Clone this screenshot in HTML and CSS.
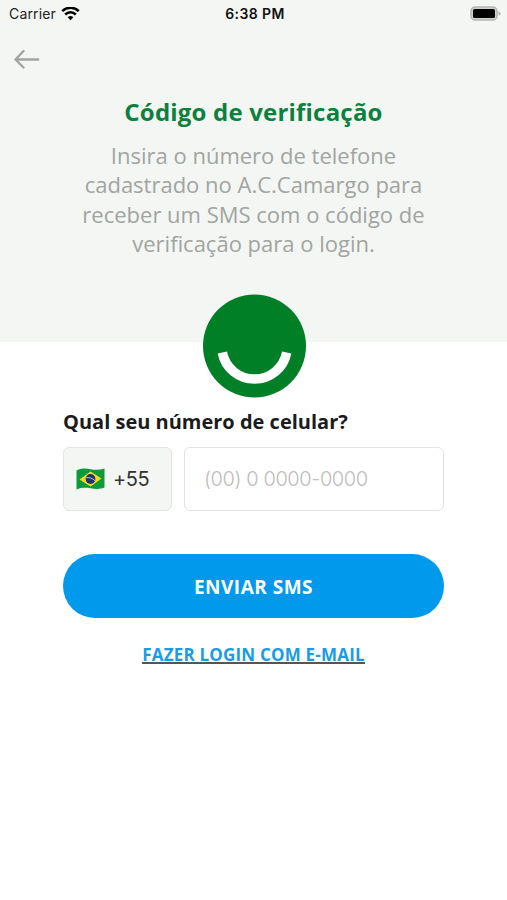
FILE: index.html
```html
<!DOCTYPE html>
<html lang="pt-BR">
<head>
    <meta charset="UTF-8">
    <meta name="viewport" content="width=device-width, initial-scale=1">
    <title>Código de verificação</title>
    <link rel="stylesheet" href="styles.css">
</head>

<body>

<header class="top">
    <div class="status">
        <div class="carrier">
            <span>Carrier</span>
            <svg width="19" height="14" viewBox="0 0 19 14" fill="none" stroke="#000" stroke-width="2.6">
                <path d="M1.2 4.2a11.8 11.8 0 0 1 16.6 0"/>
                <path d="M4.2 7.5a7.5 7.5 0 0 1 10.6 0"/>
                <path d="M9.5 13.2l-2.8-2.900a4 4 0 0 1 5.600 0z" fill="#000" stroke="none"/>
            </svg>
        </div>
        <div class="time">6:38 PM</div>
        <svg class="battery" width="32" height="16" viewBox="0 0 32 16">
            <rect x="1" y="1" width="26" height="13" rx="4" fill="#d0d2d0" stroke="#b4b6b4" stroke-width="1.5"/>
            <rect x="3" y="3" width="22" height="9" rx="1.5" fill="#000"/>
            <path d="M28.5 5l2.5 2.5-2.5 2.5z" fill="#adafad"/>
        </svg>
    </div>

    <a class="back" href="#" aria-label="Voltar">
        <svg width="26" height="20" viewBox="0 0 26 20" fill="none" stroke="#a2a4a2" stroke-width="2.4" stroke-linecap="round" stroke-linejoin="round">
            <path d="M9.500 2L1.500 10.500l8 8M1.500 10.500h22.700"/>
        </svg>
    </a>

    <h1>Código de verificação</h1>
    <p>Insira o número de telefone<br>cadastrado no A.C.Camargo para<br>receber um SMS com o código de<br>verificação para o login.</p>
</header>

<main>
    <svg class="logo" width="104" height="104" viewBox="0 0 104 104">
        <circle cx="52.5" cy="52" r="51.5" fill="#007f27"/>
        <path d="M20.3 58.500a32.800 32.800 0 0 0 64.400 0" fill="none" stroke="#fff" stroke-width="9.500"/>
    </svg>

    <form>
        <label for="phone">Qual seu número de celular?</label>
        <div class="fields">
            <div class="country">
                <svg width="29" height="22" viewBox="0 0 29 22">
                    <path d="M.5 2.500C5 .2 9.500.3 14.500 1.200S24 2 28.500.5V19.500C24 21.500 19 21 14.500 20.300S5 19.500.5 21.500z" fill="#0a9b3b"/>
                    <path d="M3.500 11.500L14.500 3.500l11 7-11 8z" fill="#fbd91a"/>
                    <circle cx="14.500" cy="11" r="4.900" fill="#1b3474"/>
                    <path d="M10 9.700c3.500-.5 6.500.5 9 3" fill="none" stroke="#c7d3df" stroke-width=".9"/>
                </svg>
                <span>+55</span>
            </div>
            <input id="phone" type="tel" placeholder="(00) 0 0000-0000">
        </div>
        <button type="button">ENVIAR SMS</button>
    </form>

    <a class="email" href="#">FAZER LOGIN COM E-MAIL</a>
</main>

</body>
</html>
```
FILE: styles.css
```css
* { box-sizing: border-box; }

body { margin: 0; background: #fff; font-family: 'Open Sans', sans-serif; }
svg  { display: block; }

.top { height: 342px; background: #f4f6f4; text-align: center; }

.status   { display: grid; grid-template-columns: 1fr auto 1fr; align-items: center; height: 27px; padding: 0 5px 0 9px; font-family: Inter, sans-serif; font-size: 14px; color: #222; }
.carrier  { display: flex; align-items: center; gap: 5px; letter-spacing: .15px; }
.time     { margin-right: 1px; font-weight: 600; letter-spacing: .4px; color: #111; }
.battery  { justify-self: end; }

.back { display: block; width: 26px; margin: 22px 0 0 14px; }

.top h1 { margin: 26px 0 0; font-size: 24px; line-height: 34px; font-weight: 700; letter-spacing: .2px; color: #0b813d; }
.top p  { margin: 12px 0 0; font-size: 22px; line-height: 29.3px; color: #a0a5a1; }

main  { width: 381px; margin: -48px auto 0 63px; }
.logo { margin: 0 auto; }

label { display: block; margin-top: 9px; font-size: 20px; line-height: 30px; font-weight: 700; color: #1b1b1d; }

.fields  { display: flex; gap: 12px; margin-top: 10px; height: 64px; }
.country { display: flex; align-items: center; gap: 8px; width: 109px; padding-left: 12px; border: 1px solid #e3e6e3; border-radius: 6px; background: #f4f6f4; font-family: Inter, sans-serif; font-size: 20px; letter-spacing: -.5px; color: #333; }

input { flex: 1; min-width: 0; padding: 0 19px; border: 1px solid #e3e3e3; border-radius: 6px; background: #fff; font-family: Inter, sans-serif; font-size: 20px; font-weight: 300; letter-spacing: -.4px; }
input::placeholder { color: #bdbdbd; }

button { display: block; width: 100%; height: 64px; margin-top: 43px; padding-top: 2px; border: 0; border-radius: 32px; background: #0099eb; font-family: inherit; font-size: 19px; font-weight: 700; letter-spacing: .5px; color: #fff; }

.email { display: block; width: fit-content; margin: 29px auto 0; border-bottom: 2px solid #555; font-size: 17px; line-height: 15px; font-weight: 700; letter-spacing: .2px; color: #1a9be6; text-decoration: none; }
```
